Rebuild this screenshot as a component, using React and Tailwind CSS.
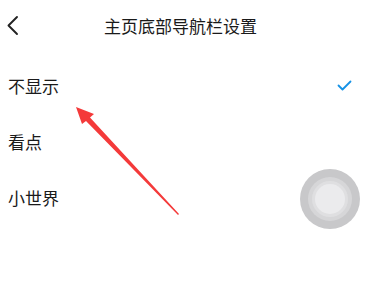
import React from "react";

function Row({ label, checked }) {
  return (
    <div className="flex items-center justify-between h-[56px] pl-[8px] pr-[13px]">
      <span className="text-[17px] text-[#1a1a1a] leading-none">{label}</span>
      {checked && (
        <svg width="15" height="11" viewBox="0 0 15 11">
          <path d="M1.5 5.5 L5.5 9.5 L13.5 1.5" fill="none" stroke="#1592e6" strokeWidth="1.8" strokeLinecap="round" strokeLinejoin="round" />
        </svg>
      )}
    </div>
  );
}

export default function App() {
  return (
    <div
      className="relative w-[365px] h-[285px] bg-white overflow-hidden"
      style={{ fontFamily: '"Noto Sans CJK SC", "Noto Sans", sans-serif' }}
    >
      {/* Header */}
      <div className="relative flex items-center justify-center h-[51px]">
        <svg className="absolute left-[6px] top-[15px]" width="14" height="22" viewBox="0 0 14 22">
          <path d="M11 2 L2.5 10.5 L11 19" fill="none" stroke="#222" strokeWidth="1.9" strokeLinecap="round" strokeLinejoin="round" />
        </svg>
        <span className="text-[17px] text-[#1a1a1a] leading-none ml-[-4px]">主页底部导航栏设置</span>
      </div>

      {/* Options */}
      <div className="flex flex-col mt-[6px]">
        <Row label="不显示" checked />
        <Row label="看点" />
        <Row label="小世界" />
      </div>

      {/* Red annotation arrow */}
      <svg className="absolute left-0 top-0 pointer-events-none" width="365" height="285" viewBox="0 0 365 285">
        <polygon points="76,107 94,114 90,117.5 179,214 178,215 86,121 82,124" fill="#f43a3a" />
      </svg>

      {/* Floating assistive button */}
      <div className="absolute left-[300px] top-[169px] w-[60px] h-[60px] rounded-full bg-[#c8c8ca] flex items-center justify-center">
        <div className="w-[44px] h-[44px] rounded-full bg-[#d6d6d8] flex items-center justify-center">
          <div className="w-[36px] h-[36px] rounded-full bg-[#dfdfe1] flex items-center justify-center">
            <div className="w-[30px] h-[30px] rounded-full bg-[#ebebed]" />
          </div>
        </div>
      </div>
    </div>
  );
}
